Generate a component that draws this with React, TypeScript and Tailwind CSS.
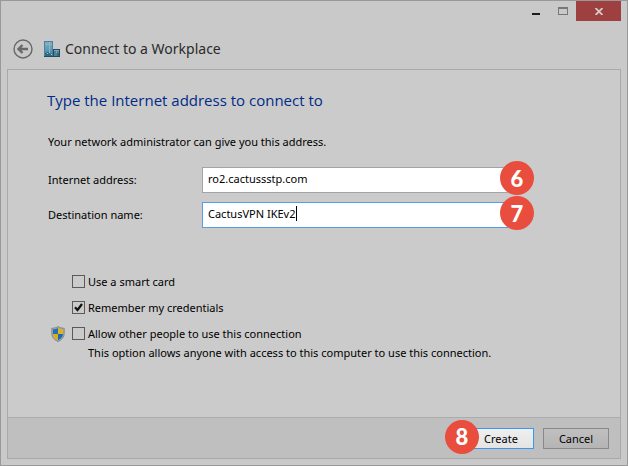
import { useState, type ReactNode } from "react";

function Badge({ children, className }: { children: ReactNode; className: string }) {
  return (
    <span
      className={`pointer-events-none absolute flex size-[34px] items-center justify-center rounded-full bg-[#e94d3d] pt-px font-[Lato,sans-serif] text-[22px] leading-none font-black text-white ${className}`}
    >
      {children}
    </span>
  );
}

function BackIcon() {
  return (
    <svg viewBox="0 0 20 20" className="size-5" fill="none" stroke="#686868">
      <circle cx="10" cy="10" r="9" strokeWidth="1.4" />
      <path d="M5.500 10H15M9.500 6 5.500 10l4 4" strokeWidth="2.4" />
    </svg>
  );
}

function WorkplaceIcon() {
  return (
    <svg viewBox="0 0 16 16" className="size-4" shapeRendering="crispEdges">
      <defs>
        <linearGradient id="tower" x1="0" y1="0" x2="0" y2="1">
          <stop offset="0" stopColor="#82aabd" />
          <stop offset="0.6" stopColor="#5c97b3" />
          <stop offset="1" stopColor="#2f6c8a" />
        </linearGradient>
      </defs>
      <rect width="9" height="16" fill="#4683a0" />
      <rect x="1" y="1" width="7" height="14" fill="url(#tower)" />
      <path d="M5 1h1v10H5zM1 3h7v1H1z" fill="#9dbecb" opacity=".6" />
      <path d="M1 12h2v-1h2v2h2v2H1z" fill="#2f6a86" />
      <path d="M3 12h1v1H3zM5 11h1v1H5zM7 13h1v1H7z" fill="#a3c2ce" />
      <rect y="15" width="16" height="1" fill="#1f4d63" />
      <rect x="9" y="8" width="7" height="8" fill="#27495a" />
      <rect x="10" y="9" width="5" height="6" fill="#4b8199" />
      <path d="M10 9h5v1h-5zM12 10h1v2h-1z" fill="#78a5b7" />
      <path d="M13 12h2v3h-2z" fill="#386a83" />
    </svg>
  );
}

function ShieldIcon() {
  return (
    <svg viewBox="0 0 14 16" className="h-4 w-[14px]">
      <defs>
        <clipPath id="shield">
          <path d="M7 2C5.400 3 3.700 3.300 2 3.200V7.500c0 3 2 5.500 5 6.800 3-1.300 5-3.800 5-6.800V3.200C10.300 3.300 8.600 3 7 2Z" />
        </clipPath>
      </defs>
      <path
        d="M7 .6C5.200 1.800 3 2.300.8 2.200V7.500c0 3.700 2.500 6.500 6.200 8 3.700-1.500 6.200-4.300 6.200-8V2.200C11 2.300 8.800 1.800 7 .6Z"
        fill="#a5a9a9"
        stroke="#777d7f"
        strokeWidth=".8"
      />
      <g clipPath="url(#shield)">
        <path d="M0 0h7v8H0z" fill="#2370b8" />
        <path d="M7 0h7v8H7z" fill="#dcb61c" />
        <path d="M0 8h7v8H0z" fill="#dcae18" />
        <path d="M7 8h7v8H7z" fill="#1d68b4" />
      </g>
    </svg>
  );
}

function Option({
  id,
  label,
  defaultChecked = false,
}: {
  id: string;
  label: string;
  defaultChecked?: boolean;
}) {
  const [checked, setChecked] = useState(defaultChecked);
  return (
    <div className="flex h-[13px] items-center gap-[3px]">
      <span className="relative flex size-[13px]">
        <input
          id={id}
          type="checkbox"
          checked={checked}
          onChange={(e) => setChecked(e.target.checked)}
          className="size-[13px] appearance-none border border-[#5a5a5a] bg-[#cbcbcb]"
        />
        {checked && (
          <svg
            viewBox="0 0 13 13"
            className="pointer-events-none absolute inset-0 size-[13px]"
            fill="none"
            stroke="#111"
            strokeWidth="2.2"
          >
            <path d="M3 6.300 5.500 9 10 3" />
          </svg>
        )}
      </span>
      <label htmlFor={id}>{label}</label>
    </div>
  );
}

export default function App() {
  const [address, setAddress] = useState("ro2.cactussstp.com");
  const [name, setName] = useState("CactusVPN IKEv2");

  return (
    <main className="flex min-h-screen flex-col border border-[#999] bg-[#c9c9c9] font-['Noto_Sans','Open_Sans',sans-serif] text-[11px] leading-4 text-black">
      <div className="flex h-5 justify-end pr-[6px]">
        <button aria-label="Minimize" className="flex w-[26px] items-center justify-center">
          <svg viewBox="0 0 8 20" className="h-5 w-2" shapeRendering="crispEdges">
            <path d="M0 12h8v2H0z" fill="#1c1c1c" />
          </svg>
        </button>
        <button aria-label="Maximize" disabled className="flex w-[27px] items-center justify-center">
          <svg viewBox="0 0 10 20" className="h-5 w-[10px]" shapeRendering="crispEdges">
            <path d="M0 6h10v8H0zM1 8v5h8V8z" fillRule="evenodd" fill="#777" />
          </svg>
        </button>
        <button aria-label="Close" className="flex w-[45px] items-center justify-center bg-[#9f4040]">
          <svg viewBox="0 0 8 7" className="h-[7px] w-2" stroke="#d3caca" strokeWidth="1.8">
            <path d="M.5 0l7 7M7.500 0l-7 7" />
          </svg>
        </button>
      </div>

      <header className="flex h-12 items-center pt-[7px] pl-3">
        <button aria-label="Back">
          <BackIcon />
        </button>
        <span className="ml-[11px]">
          <WorkplaceIcon />
        </span>
        <h1 className="ml-[5px] text-[14px] leading-5 text-[#2b2b2b]">Connect to a Workplace</h1>
      </header>

      <form
        onSubmit={(e) => e.preventDefault()}
        className="mx-[6px] mb-[6px] flex flex-1 flex-col border border-[#a9a9a9] bg-[#cbcbcb]"
      >
        <div className="flex-1 px-10 pt-5">
          <h2 className="-ml-px font-['Open_Sans',sans-serif] text-[15px] leading-5 text-[#002b87]">
            Type the Internet address to connect to
          </h2>
          <p className="mt-6">Your network administrator can give you this address.</p>

          <div className="mt-[17px] grid grid-cols-[154px_minmax(0,306px)] items-center gap-y-[9px]">
            <label htmlFor="address">Internet address:</label>
            <div className="relative">
              <input
                id="address"
                value={address}
                onChange={(e) => setAddress(e.target.value)}
                className="block h-[26px] w-full border border-[#a3a3aa] bg-white px-[5px] pb-1 outline-none"
              />
              <Badge className="top-[-6px] right-[-26px]">6</Badge>
            </div>
            <label htmlFor="name">Destination name:</label>
            <div className="relative">
              <input
                id="name"
                value={name}
                onChange={(e) => setName(e.target.value)}
                className="block h-[26px] w-full border border-[#569de5] bg-white px-[5px] pb-1 outline-none"
              />
              <span className="absolute top-1 left-[94px] h-[15px] w-px bg-black" />
              <Badge className="top-[-6px] right-[-26px]">7</Badge>
            </div>
          </div>

          <div className="mt-[47px] flex flex-col gap-[13px] pl-6">
            <Option id="smart" label="Use a smart card" />
            <Option id="remember" label="Remember my credentials" defaultChecked />
            <div className="relative">
              <span className="absolute top-[-1px] left-[-21px]">
                <ShieldIcon />
              </span>
              <Option id="share" label="Allow other people to use this connection" />
              <p className="mt-[5px] pl-4">
                This option allows anyone with access to this computer to use this connection.
              </p>
            </div>
          </div>
        </div>

        <footer className="flex h-[41px] items-center justify-end gap-[9px] border-t border-[#acacac] bg-[#bfbfbf] pr-[11px]">
          <div className="relative">
            <button
              type="submit"
              className="block h-[21px] w-[66px] border border-[#3a96ee] bg-linear-to-b from-[#efefef] to-[#e4e4e4] leading-none"
            >
              Create
            </button>
            <Badge className="top-[-8px] left-[-23px]">8</Badge>
          </div>
          <button
            type="button"
            className="h-[21px] w-[66px] border border-[#898989] bg-linear-to-b from-[#bfbfbf] to-[#b5b5b5] leading-none"
          >
            Cancel
          </button>
        </footer>
      </form>
    </main>
  );
}
